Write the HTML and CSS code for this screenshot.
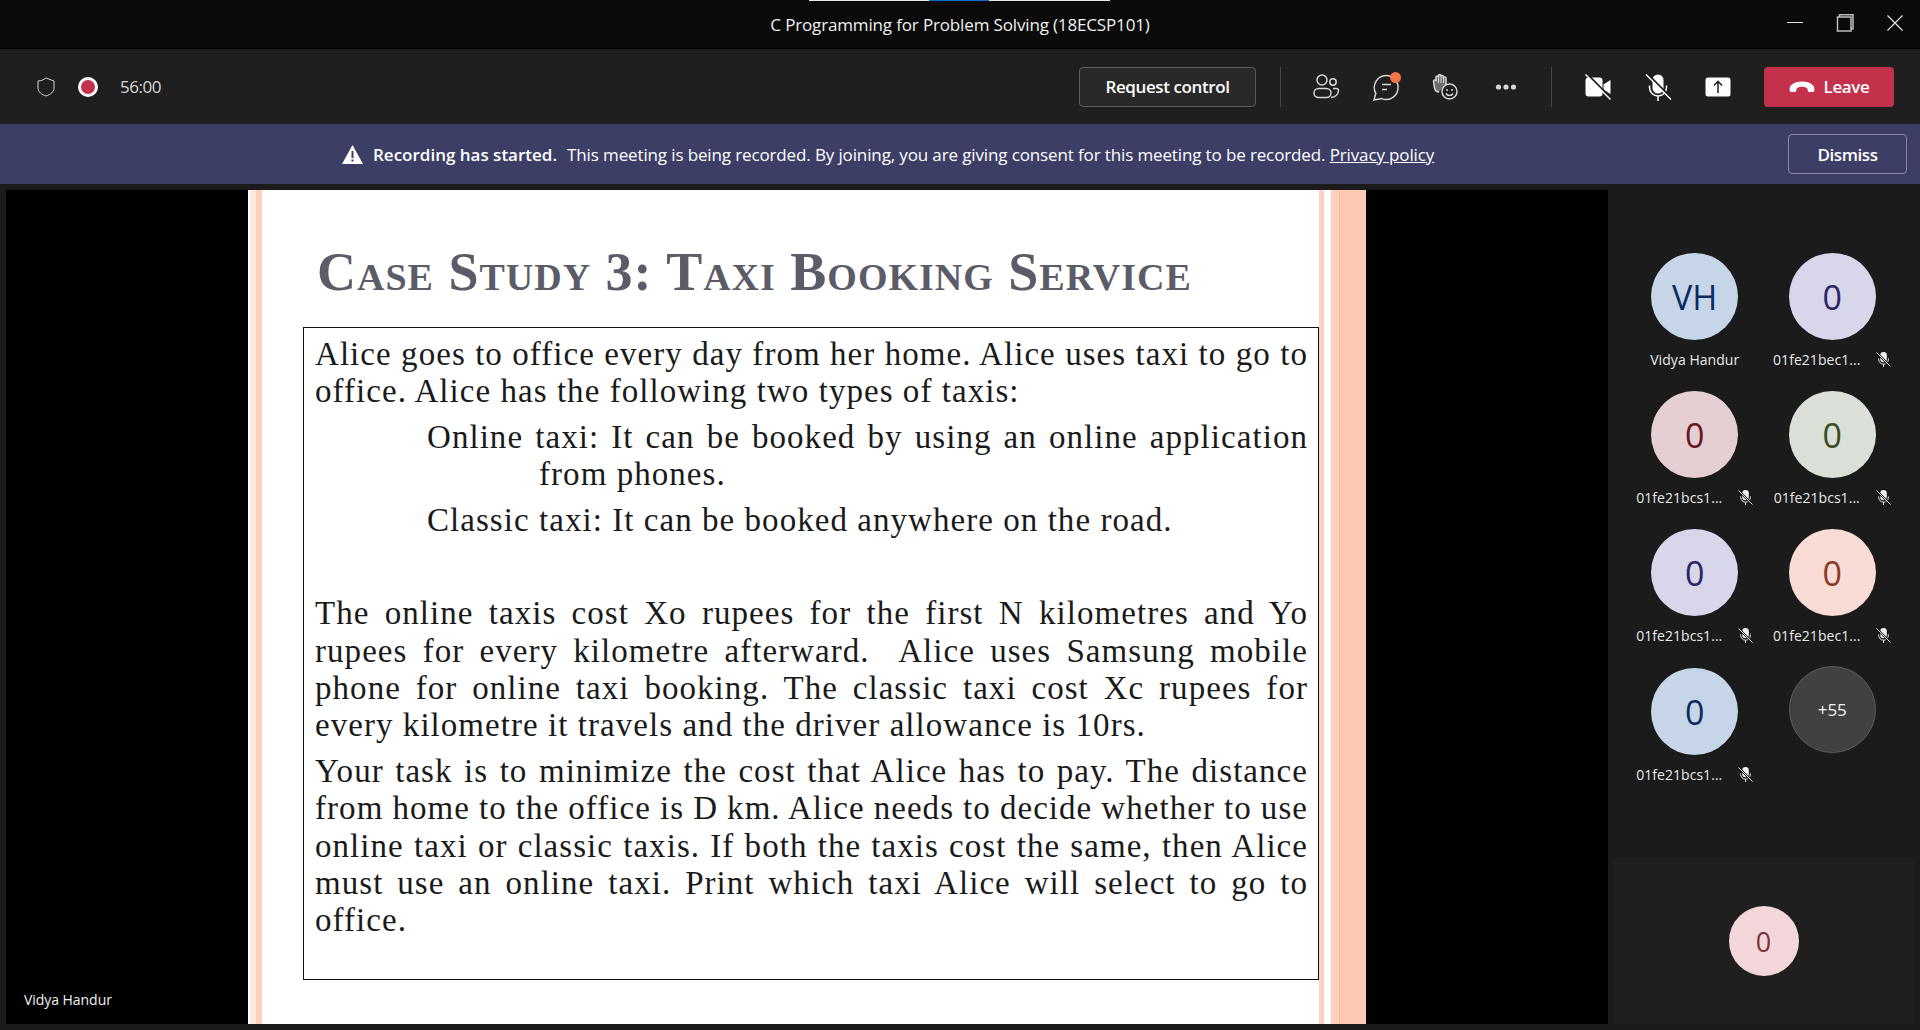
FILE: index.html
```html
<!DOCTYPE html>
<html lang="en">
<head>
    <meta charset="utf-8">
    <title>C Programming for Problem Solving (18ECSP101)</title>
    <link rel="stylesheet" href="styles.css">
</head>
<body>
    <svg class="defs" width="0" height="0">
        <symbol id="micoff" viewBox="0 0 16 16">
            <path d="M4.500 3.500a3.500 3.500 0 0 1 7 0v4a3.500 3.500 0 0 1-7 0z" fill="#f0f0f0"/>
            <path d="M2.800 6.800v1a5.200 5.200 0 0 0 10.400 0v-1M8 13v3" fill="none" stroke="#f0f0f0" stroke-width="1"/>
            <path d="M.5 .5l15 15" stroke="#1b1b1b" stroke-width="2.400"/>
            <path d="M.5 .5l15 15" stroke="#f0f0f0" stroke-width="1"/>
        </symbol>
    </svg>

    <header class="titlebar">
        <div class="topstrip"><span class="strip-white"></span><span class="strip-blue"></span><span class="strip-white"></span></div>
        <div class="apptitle">C Programming for Problem Solving (18ECSP101)</div>
        <div class="winctl">
            <svg width="16" height="16" viewBox="0 0 16 16"><path d="M0 7.500h16" stroke="#e6e6e6" stroke-width="1"/></svg>
            <svg width="18" height="18" viewBox="0 0 18 18" fill="none" stroke="#bdbdbd" stroke-width="1.500"><rect x="1.500" y="3" width="13.500" height="14"/><path d="M3.500 3V.8h13.500v14h-2"/></svg>
            <svg width="16" height="16" viewBox="0 0 16 16"><path d="M.5 .5l15 15M15.500 .5l-15 15" stroke="#e6e6e6" stroke-width="1.200"/></svg>
        </div>
    </header>

    <section class="toolbar">
        <div class="status">
            <svg class="shield" width="20" height="20" viewBox="0 0 20 20"><path d="M10 1l8 3v7c0 4-3.500 6.500-8 8-4.500-1.500-8-4-8-8V4c3 0 5.500-1.200 8-3z" fill="none" stroke="#d6d6d6" stroke-width="1"/></svg>
            <span class="recdot"></span>
            <span class="timer">56:00</span>
        </div>
        <div class="actions">
            <button class="reqbtn">Request control</button>
            <span class="sep first"></span>
            <div class="iconset">
                <svg width="30" height="30" viewBox="0 0 30 30" fill="none" stroke="#d6d6d6" stroke-width="1.500"><circle cx="11" cy="8" r="5"/><circle cx="22" cy="10" r="3.200"/><rect x="3" y="16.500" width="17" height="9" rx="4.500"/><path d="M22 16.500h3.500a2 2 0 0 1 2 2c0 3.500-3 7-7.500 7"/></svg>
                <span class="chat">
                    <svg width="30" height="30" viewBox="0 0 30 30" fill="none" stroke="#d6d6d6" stroke-width="1.500"><path d="M15 3.500a12 12 0 1 1-4.500 23.100L3 28l1.800-6.700A12 12 0 0 1 15 3.500z"/><path d="M11 12.500h9M11 17.500h5"/></svg>
                    <i class="badge"></i>
                </span>
                <svg width="30" height="30" viewBox="0 0 30 30" fill="none" stroke="#d6d6d6" stroke-width="1.500"><path d="M8 20c-3 0-4-2-4.500-4L2.500 9c0-1.500 2-1.500 2.500 0V5c0-1.500 2.200-1.500 2.500 0V3.500c0-1.500 2.500-1.500 2.500 0V4.500c0-1.500 2.500-1.500 2.500 0V6c0-1.500 2.500-1.500 2.500 0V13" fill="#6e6e6e"/><path d="M7.500 5v6M10 3.500v7.500M12.500 4.500V11" stroke-width="1"/><circle cx="18.500" cy="19.500" r="7.500" fill="#1f1f1f"/><circle cx="16" cy="18" r="1" fill="#d6d6d6" stroke="none"/><circle cx="21" cy="18" r="1" fill="#d6d6d6" stroke="none"/><path d="M15 21.500c1.500 2.500 5.500 2.500 7 0"/></svg>
                <svg width="30" height="30" viewBox="0 0 30 30" fill="#d6d6d6"><circle cx="7.500" cy="15" r="2.600"/><circle cx="15" cy="15" r="2.600"/><circle cx="22.500" cy="15" r="2.600"/></svg>
            </div>
            <span class="sep"></span>
            <div class="iconset media">
                <svg width="30" height="30" viewBox="0 0 30 30"><rect x="2.500" y="5.500" width="17" height="19" rx="3" fill="#fff"/><path d="M20.500 12.500l7-4.500v14l-7-4.500z" fill="#fff"/><path d="M3.500 1.500l25 25" stroke="#1f1f1f" stroke-width="2"/><path d="M2.500 2.500l25 25" stroke="#fff" stroke-width="1.500"/></svg>
                <svg width="30" height="30" viewBox="0 0 30 30"><rect x="9.500" y="2.500" width="11" height="19" rx="5.500" fill="#fff"/><path d="M6.500 13.500v2a8.500 8.500 0 0 0 17 0v-2M15 24v5" fill="none" stroke="#fff" stroke-width="1.500"/><path d="M4 1.500l25 25" stroke="#1f1f1f" stroke-width="2"/><path d="M3 2.500l25 25" stroke="#fff" stroke-width="1.500"/></svg>
                <svg width="30" height="30" viewBox="0 0 30 30"><rect x="2.500" y="5.500" width="25" height="19" rx="2.500" fill="#fff"/><path d="M15 21V9.500M11 13.500L15 9.300l4 4.200" fill="none" stroke="#1f1f1f" stroke-width="1.500"/></svg>
            </div>
            <button class="leavebtn">
                <svg width="26" height="12" viewBox="0 0 26 12"><path d="M1.500 11C0 9.500 .3 6 2 4.300 5 1.500 9 .5 13 .5s8 1 11 3.800C25.700 6 26 9.500 24.500 11h-5c-1-1-.7-3-1.700-4-1.200-1-3.200-1.300-4.800-1.300S9.400 6 8.200 7c-1 1-.7 3-1.700 4z" fill="#fff"/></svg>
                Leave
            </button>
        </div>
    </section>

    <section class="banner">
        <div class="notice">
            <svg width="21" height="19" viewBox="0 0 21 19"><path d="M10.500 0L21 19H0z" fill="#fff"/><path d="M10.500 6v7M10.500 14.500v2" stroke="#3d3e66" stroke-width="2"/></svg>
            <b>Recording has started.</b>
            <span>This meeting is being recorded. By joining, you are giving consent for this meeting to be recorded. <u>Privacy policy</u></span>
        </div>
        <button class="dismiss">Dismiss</button>
    </section>

    <main class="stage">
        <section class="video">
            <div class="slide">
                <div class="edge-left"></div>
                <div class="slide-body">
                    <h1 class="slide-title">Case Study 3: Taxi Booking Service</h1>
                    <div class="taskbox">
                        <p class="para">
                            <span class="ln">Alice goes to office every day from her home. Alice uses taxi to go to</span>
                            <span class="ln end">office. Alice has the following two types of taxis:</span>
                        </p>
                        <p class="para indent">
                            <span class="ln">Online taxi: It can be booked by using an online application</span>
                            <span class="ln end hang">from phones.</span>
                        </p>
                        <p class="para indent">
                            <span class="ln end">Classic taxi: It can be booked anywhere on the road.</span>
                        </p>
                        <p class="para gap">
                            <span class="ln">The online taxis cost Xo rupees for the first N kilometres and Yo</span>
                            <span class="ln">rupees for every kilometre afterward.&nbsp; Alice uses Samsung mobile</span>
                            <span class="ln">phone for online taxi booking. The classic taxi cost Xc rupees for</span>
                            <span class="ln end">every kilometre it travels and the driver allowance is 10rs.</span>
                        </p>
                        <p class="para">
                            <span class="ln">Your task is to minimize the cost that Alice has to pay. The distance</span>
                            <span class="ln">from home to the office is D km. Alice needs to decide whether to use</span>
                            <span class="ln">online taxi or classic taxis. If both the taxis cost the same, then Alice</span>
                            <span class="ln">must use an online taxi. Print which taxi Alice will select to go to</span>
                            <span class="ln end">office.</span>
                        </p>
                    </div>
                </div>
                <div class="edge-right"></div>
            </div>
            <span class="speaker">Vidya Handur</span>
        </section>

        <aside class="sidebar">
            <div class="grid">
                <div class="tile">
                    <div class="avatar blue">VH</div>
                    <div class="name"><span>Vidya Handur</span></div>
                </div>
                <div class="tile">
                    <div class="avatar lilac">0</div>
                    <div class="name"><span>01fe21bec1...</span><svg class="mute"><use href="#micoff"/></svg></div>
                </div>
                <div class="tile">
                    <div class="avatar rose">0</div>
                    <div class="name"><span>01fe21bcs1...</span><svg class="mute"><use href="#micoff"/></svg></div>
                </div>
                <div class="tile">
                    <div class="avatar sage">0</div>
                    <div class="name"><span>01fe21bcs1...</span><svg class="mute"><use href="#micoff"/></svg></div>
                </div>
                <div class="tile">
                    <div class="avatar lilac">0</div>
                    <div class="name"><span>01fe21bcs1...</span><svg class="mute"><use href="#micoff"/></svg></div>
                </div>
                <div class="tile">
                    <div class="avatar peach">0</div>
                    <div class="name"><span>01fe21bec1...</span><svg class="mute"><use href="#micoff"/></svg></div>
                </div>
                <div class="tile low">
                    <div class="avatar blue">0</div>
                    <div class="name"><span>01fe21bcs1...</span><svg class="mute"><use href="#micoff"/></svg></div>
                </div>
                <div class="tile">
                    <div class="avatar more">+55</div>
                </div>
            </div>
            <div class="selftile">
                <div class="avatar self">0</div>
            </div>
        </aside>
    </main>
</body>
</html>
```

FILE: styles.css
```css
* {
    box-sizing: border-box;
}
html, body {
    margin: 0;
    height: 100%;
}
body {
    width: 1920px;
    height: 1030px;
    overflow: hidden;
    display: flex;
    flex-direction: column;
    background: #1b1b1b;
    color: #fff;
    font-family: "Open Sans", "Noto Sans", sans-serif;
}
.defs {
    display: none;
}
svg {
    display: block;
    flex: none;
}
button {
    font-family: inherit;
    color: #fff;
    font-weight: 600;
    font-size: 17px;
    letter-spacing: -0.4px;
}

/* title bar */
.titlebar {
    height: 49px;
    flex: none;
    position: relative;
    display: flex;
    align-items: center;
    justify-content: center;
    background: #0a0a0a;
    border-bottom: 1px solid #000;
}
.topstrip {
    position: absolute;
    top: 0;
    left: 809px;
    display: flex;
    height: 1px;
}
.strip-white {
    width: 120px;
    background: #e8e8e8;
}
.strip-blue {
    width: 60px;
    background: #0a6cd4;
}
.strip-white:last-child {
    width: 121px;
}
.apptitle {
    font-size: 17px;
    letter-spacing: -0.15px;
    color: #f0f0f0;
}
.winctl {
    position: absolute;
    right: 17px;
    top: 14px;
    display: flex;
    align-items: center;
    gap: 33px;
}

/* meeting toolbar */
.toolbar {
    height: 75px;
    flex: none;
    display: flex;
    align-items: center;
    justify-content: space-between;
    padding: 0 26px 0 36px;
    background: #1f1f1f;
}
.status {
    display: flex;
    align-items: center;
}
.recdot {
    width: 20px;
    height: 20px;
    margin-left: 22px;
    border-radius: 50%;
    background: #c4314b;
    border: 3px solid #fff;
}
.timer {
    margin-left: 22px;
    font-size: 17px;
    letter-spacing: -0.5px;
    color: #d6d6d6;
}
.actions {
    display: flex;
    align-items: center;
}
.reqbtn {
    width: 177px;
    height: 40px;
    background: #292929;
    border: 1px solid #5c5c5c;
    border-radius: 4px;
}
.sep {
    width: 1px;
    height: 40px;
    margin-left: 30px;
    background: #4a4a4a;
}
.sep.first {
    margin-left: 24px;
}
.iconset {
    display: flex;
    align-items: center;
    gap: 30px;
    margin-left: 30px;
}
.iconset.media {
    margin-left: 31px;
}
.chat {
    position: relative;
}
.badge {
    position: absolute;
    top: 0;
    right: 0;
    width: 11px;
    height: 11px;
    border-radius: 50%;
    background: #f0764a;
}
.leavebtn {
    width: 130px;
    height: 40px;
    margin-left: 31px;
    display: flex;
    align-items: center;
    justify-content: center;
    gap: 9px;
    background: #c4314b;
    border: 0;
    border-radius: 4px;
}

/* recording banner */
.banner {
    height: 60px;
    flex: none;
    position: relative;
    display: flex;
    align-items: center;
    padding-left: 342px;
    background: #3d3e66;
}
.notice {
    display: flex;
    align-items: center;
    font-size: 17px;
    letter-spacing: -0.13px;
}
.notice b {
    margin-left: 10px;
    font-weight: 600;
    letter-spacing: 0;
}
.notice span {
    margin-left: 10px;
}
.dismiss {
    position: absolute;
    right: 13px;
    top: 10px;
    width: 119px;
    height: 40px;
    background: #3d3e66;
    border: 1px solid #8a8ba8;
    border-radius: 4px;
}

/* shared screen */
.stage {
    flex: 1;
    display: flex;
    padding-top: 6px;
    padding-bottom: 6px;
    min-height: 0;
}
.video {
    width: 1602px;
    margin-left: 6px;
    position: relative;
    display: flex;
    justify-content: center;
    background: #000;
    overflow: hidden;
}
.slide {
    width: 1118px;
    display: flex;
    background: #fff;
    overflow: hidden;
}
.edge-left {
    width: 14px;
    flex: none;
    background: linear-gradient(90deg, #fff 0, #fff 2px, #fdeade 2px, #fdeade 8px, #fdd0bf 8px);
}
.edge-right {
    width: 50px;
    flex: none;
    background: linear-gradient(90deg, #fdd0bf 0, #fdd0bf 5px, #fff 5px, #fff 12px, #fdd0bf 12px, #fdd0bf 20px, #fbbf8f 20px, #fbbf8f 21px, #fdc8b4 21px);
}
.slide-body {
    flex: 1;
    padding: 0 0 0 41px;
}
.slide-title {
    margin: 55px 0 28px 14px;
    font-family: "Liberation Serif", serif;
    font-size: 54px;
    line-height: 54px;
    font-weight: 700;
    font-variant: small-caps;
    letter-spacing: 1px;
    color: #5c5c68;
    white-space: nowrap;
}
.taskbox {
    width: 1016px;
    height: 653px;
    padding: 8px 10px 0 11px;
    border: 1.500px solid #111;
    font-family: "Liberation Serif", serif;
    font-size: 33px;
    line-height: 37.300px;
    letter-spacing: 1.050px;
    color: #1a1a1a;
}
.para {
    margin: 0 0 8.500px;
}
.para.indent {
    padding-left: 112px;
}
.para.gap {
    margin-top: 56px;
}
.ln {
    display: block;
    text-align: justify;
    text-align-last: justify;
    word-spacing: -4px;
}
.ln.end {
    text-align-last: left;
    word-spacing: 0;
}
.ln.hang {
    padding-left: 112px;
}
.speaker {
    position: absolute;
    left: 18px;
    bottom: 15px;
    font-size: 14px;
    letter-spacing: -0.05px;
    color: #f0f0f0;
}

/* participants */
.sidebar {
    flex: 1;
    display: flex;
    flex-direction: column;
    padding: 63px 6px 0 18px;
    background: #1b1b1b;
}
.grid {
    display: grid;
    grid-template-columns: 137.500px 137.500px;
    grid-auto-rows: 138px;
}
.tile {
    display: flex;
    flex-direction: column;
    align-items: center;
}
.tile.low {
    padding-top: 1px;
}
.avatar {
    width: 87px;
    height: 87px;
    flex: none;
    display: flex;
    align-items: center;
    justify-content: center;
    border-radius: 50%;
    font-size: 34px;
    font-weight: 500;
}
.blue {
    background: #c7d5e8;
    color: #0b2c63;
}
.lilac {
    background: #d8d6ea;
    color: #2c2566;
}
.rose {
    background: #e6cfd2;
    color: #6a1520;
}
.sage {
    background: #dae0d7;
    color: #384c25;
}
.peach {
    background: #f9dcd6;
    color: #8b3a2a;
}
.avatar.more {
    margin-top: -1px;
    background: #414141;
    border: 1px solid #5c5c5c;
    font-size: 17px;
    font-weight: 400;
    color: #f2f2f2;
}
.name {
    height: 38px;
    display: flex;
    align-items: center;
    gap: 16px;
    font-size: 14px;
    letter-spacing: 0.05px;
    color: #e8e8e8;
}
.mute {
    width: 15px;
    height: 15px;
}
.selftile {
    height: 166px;
    margin: auto 0 0 -13px;
    display: flex;
    align-items: center;
    justify-content: center;
    background: #1f1f1f;
}
.avatar.self {
    width: 70px;
    height: 70px;
    background: #f2d6d9;
    color: #7b3038;
    font-size: 27px;
}
```
